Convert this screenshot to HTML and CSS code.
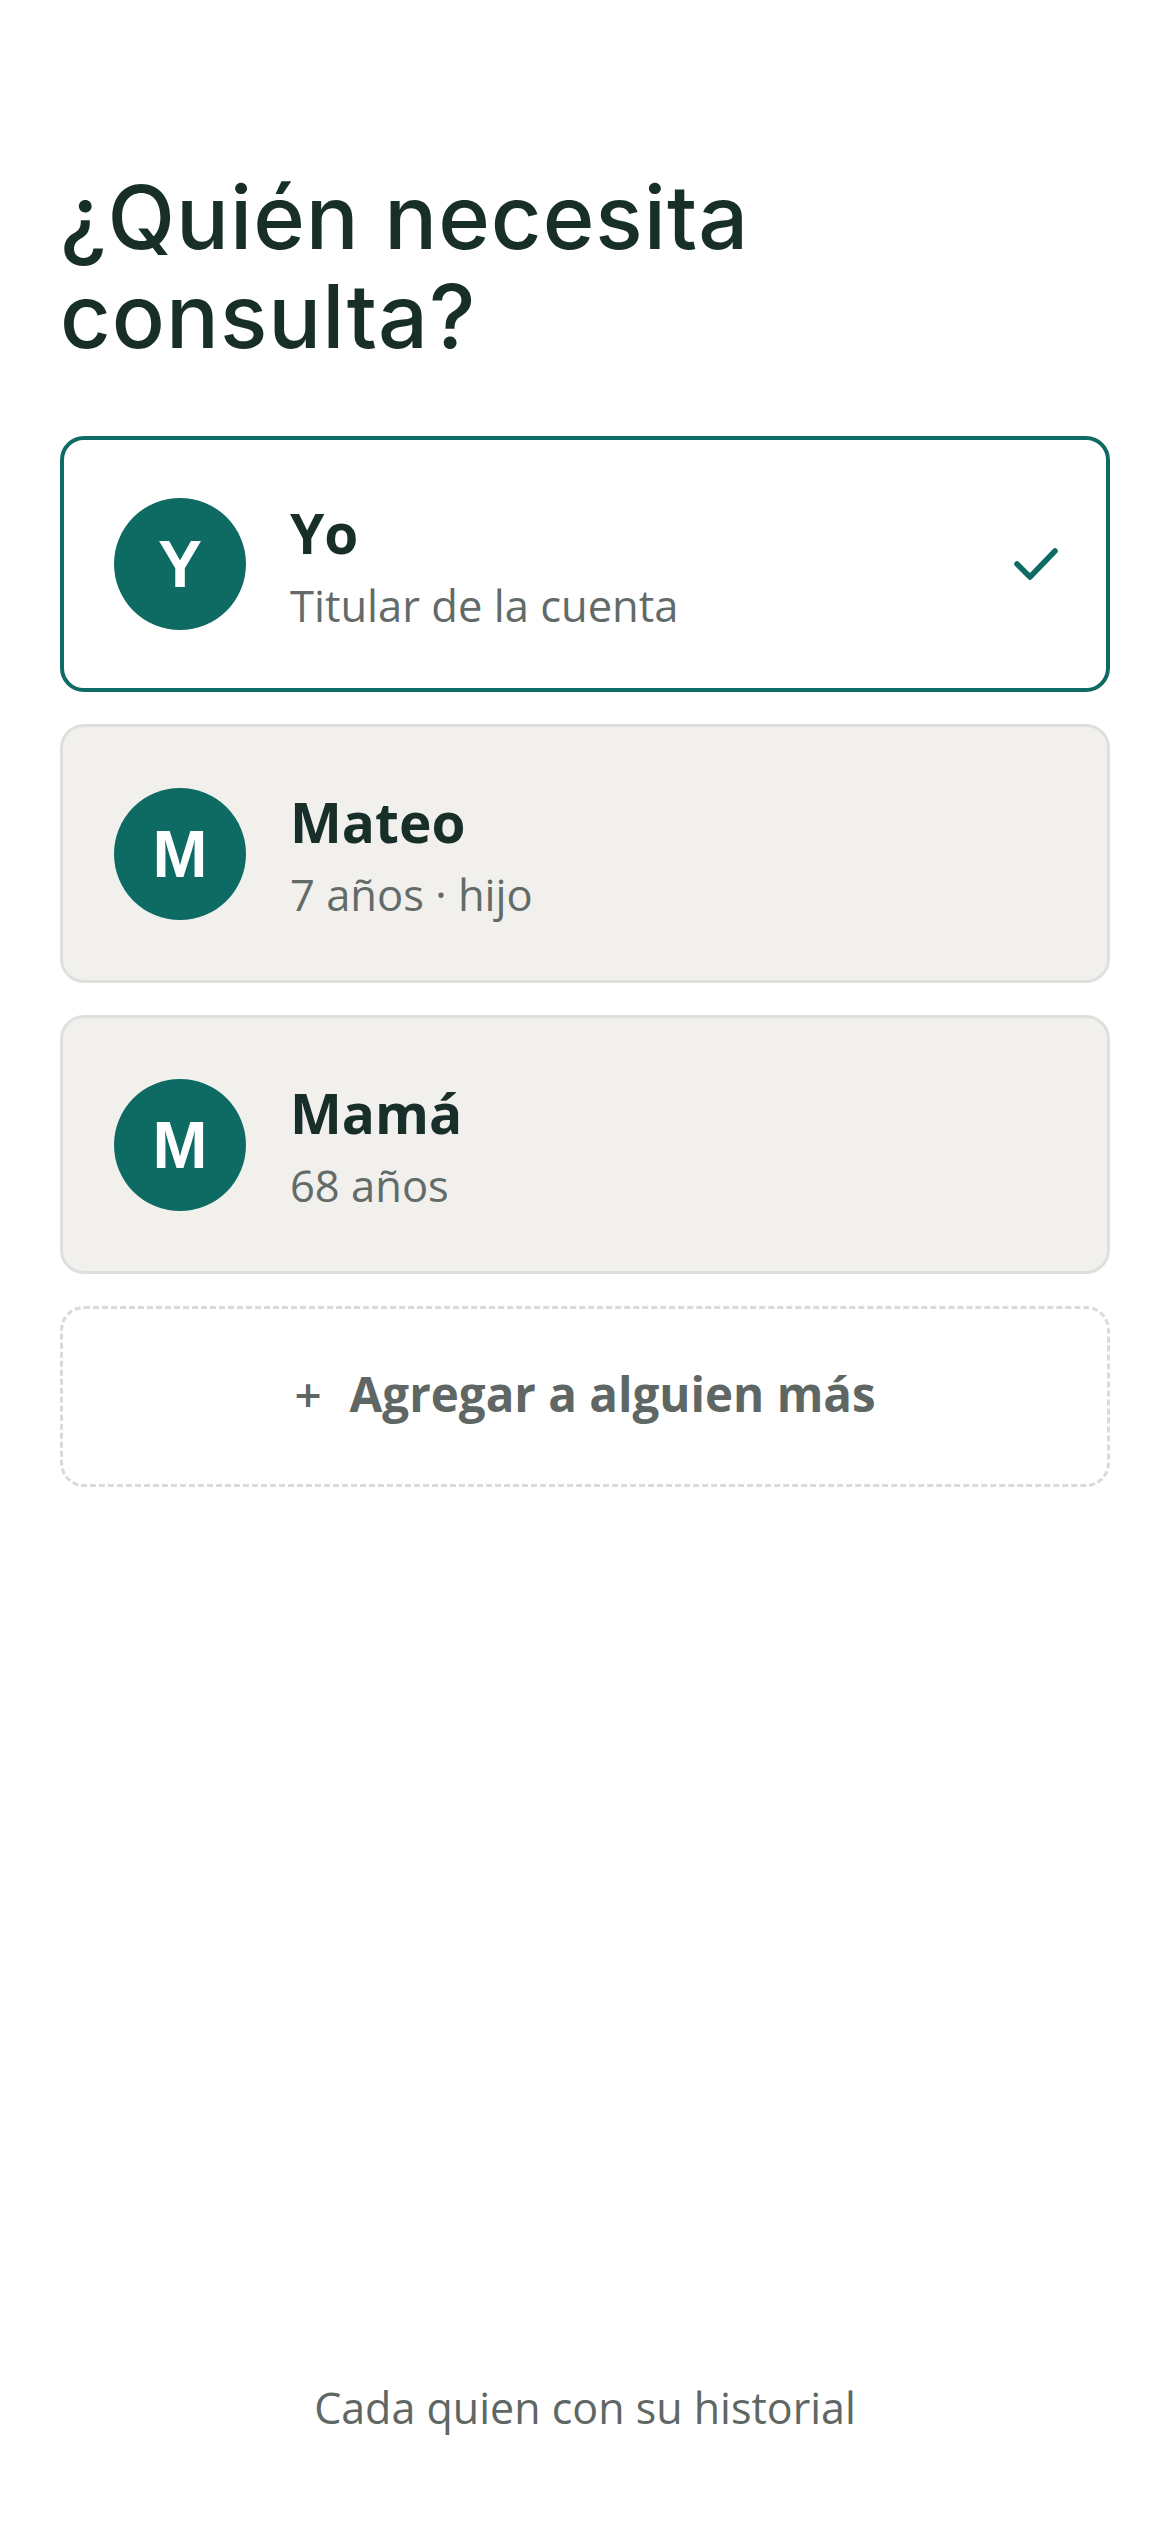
FILE: index.html
```html
<!DOCTYPE html>
<html lang="es">
<head>
<meta charset="utf-8">
<title>¿Quién necesita consulta?</title>
<link rel="stylesheet" href="styles.css">
</head>
<body>
<main class="page">
  <h1 class="title">¿Quién necesita consulta?</h1>
  <ul class="people">
    <li class="person person--selected">
      <span class="avatar">Y</span>
      <span class="info">
        <span class="name">Yo</span>
        <span class="meta">Titular de la cuenta</span>
      </span>
      <svg class="check" width="44" height="34" viewBox="0 0 44 34" aria-hidden="true">
        <polyline points="3,17 16,30 41,4" fill="none" stroke="#0e6b63" stroke-width="5.5" stroke-linecap="round" stroke-linejoin="round"/>
      </svg>
    </li>
    <li class="person">
      <span class="avatar">M</span>
      <span class="info">
        <span class="name">Mateo</span>
        <span class="meta">7 años · hijo</span>
      </span>
    </li>
    <li class="person">
      <span class="avatar">M</span>
      <span class="info">
        <span class="name">Mamá</span>
        <span class="meta">68 años</span>
      </span>
    </li>
  </ul>
  <button class="add" type="button"><span class="add-plus">+</span>Agregar a alguien más</button>
  <p class="footer">Cada quien con su historial</p>
</main>
</body>
</html>
```

FILE: styles.css
```css
* { box-sizing: border-box; }

html, body {
  margin: 0;
  padding: 0;
  background: #ffffff;
}

.page {
  min-height: 2532px;
  display: flex;
  flex-direction: column;
  padding: 168px 60px 96px;
  font-family: "Open Sans", "Noto Sans", sans-serif;
}

.title {
  margin: 0;
  width: 800px;
  font-family: Inter, "Liberation Sans", sans-serif;
  font-weight: 500;
  font-size: 88px;
  line-height: 99px;
  letter-spacing: 1px;
  color: #172e29;
}

.people {
  list-style: none;
  margin: 70px 0 0;
  padding: 0;
  display: flex;
  flex-direction: column;
  gap: 32px;
}

.person {
  display: flex;
  align-items: center;
  gap: 44px;
  height: 259px;
  padding: 0 48px 0 51px;
  border: 3px solid #dde1de;
  border-radius: 24px;
  background: #f1f0ed;
}

.person--selected {
  height: 256px;
  border: 4px solid #0e6b63;
  background: #ffffff;
  padding-left: 50px;
}

.avatar {
  flex: none;
  width: 132px;
  height: 132px;
  border-radius: 50%;
  background: #0e6b63;
  color: #ffffff;
  display: flex;
  align-items: center;
  justify-content: center;
  font-family: "Liberation Sans", Arial, sans-serif;
  font-weight: 700;
  font-size: 66px;
  line-height: 1;
}

.info {
  flex: 1;
  display: flex;
  flex-direction: column;
  gap: 12px;
  padding-top: 6px;
}

.name {
  font-weight: 700;
  font-size: 55px;
  line-height: 1.2;
  color: #172e29;
}

.meta {
  font-size: 43.5px;
  line-height: 1.3;
  color: #626b68;
}

.check {
  flex: none;
  display: block;
}

.add {
  margin-top: 32px;
  height: 181px;
  display: flex;
  align-items: center;
  justify-content: center;
  border: 3px dashed #d7dbd9;
  border-radius: 24px;
  background: #ffffff;
  font-family: "Open Sans", "Noto Sans", sans-serif;
  font-weight: 700;
  font-size: 47.5px;
  color: #5e6764;
  padding: 0 0 6px;
  cursor: pointer;
}

.add-plus {
  margin-right: 28px;
  font-weight: 600;
}

.footer {
  margin: auto 0 0;
  text-align: center;
  font-size: 43px;
  line-height: 1.3;
  color: #5e6764;
}
```
